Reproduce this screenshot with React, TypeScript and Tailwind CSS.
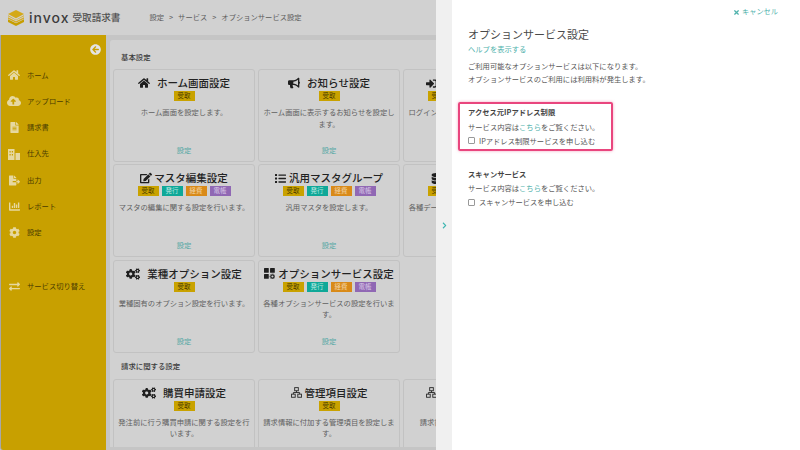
import { FaHome, FaCloudUploadAlt, FaFileAlt, FaFileExport, FaChartBar, FaCog, FaExchangeAlt, FaBullhorn, FaSignInAlt, FaEdit, FaList, FaDatabase, FaCogs, FaArrowCircleLeft, FaChevronRight, FaTimes } from "react-icons/fa";
import type { ReactNode } from "react";

const FONT = "font-['Noto_Sans_CJK_JP','Noto_Sans',sans-serif]";

function Logo() {
  return (
    <svg width="16" height="16" viewBox="0 0 24 24" className="shrink-0">
      <path d="M0 14 L12 20 L24 14 V18 L12 24 L0 18 Z" fill="#c79e00" />
      <path d="M0 11 L12 17 L24 11 L24 13 L12 19 L0 13 Z" fill="#d8ad20" />
      <path d="M12 0 L24 6 L12 12.5 L0 6 Z" fill="#d4a918" />
      <path d="M0 8 L12 14.5 L24 8 V9.5 L12 15.5 L0 9.5 Z" fill="#d8ad20" />
    </svg>
  );
}

function OptionIcon() {
  return (
    <svg width="11" height="11" viewBox="0 0 12 12" fill="#1f1f1f">
      <rect x="0" y="0" width="5.2" height="5.2" rx="0.6" />
      <rect x="6.6" y="0" width="5.2" height="5.2" rx="0.6" />
      <rect x="0" y="6.6" width="5.2" height="5.2" rx="0.6" />
      <circle cx="9.2" cy="9.2" r="1.8" fill="none" stroke="#1f1f1f" strokeWidth="1.3" />
      <circle cx="9.2" cy="9.2" r="2.8" fill="none" stroke="#1f1f1f" strokeWidth="0.7" strokeDasharray="1 1" />
    </svg>
  );
}

function TreeIcon() {
  return (
    <svg width="11" height="11" viewBox="0 0 12 12" fill="none" stroke="#2a2a2a" strokeWidth="1">
      <rect x="4" y="0.7" width="4" height="3.4" />
      <path d="M6 4.1 V6 M2.6 7.8 V6 H9.4 V7.8" />
      <rect x="0.6" y="7.8" width="4" height="3.4" />
      <rect x="7.4" y="7.8" width="4" height="3.4" />
    </svg>
  );
}

function VendorIcon() {
  return (
    <svg width="12" height="11" viewBox="0 0 12 11" fill="#e6d8a0">
      <rect x="0" y="0" width="6.5" height="11" />
      <rect x="7.5" y="4" width="4.5" height="7" />
      <rect x="1.5" y="2" width="1.2" height="1.5" fill="#c8a000" />
      <rect x="3.8" y="2" width="1.2" height="1.5" fill="#c8a000" />
      <rect x="1.5" y="5" width="1.2" height="1.5" fill="#c8a000" />
      <rect x="3.8" y="5" width="1.2" height="1.5" fill="#c8a000" />
    </svg>
  );
}

const TAGS: Record<string, string> = {
  受取: "bg-[#c9a200] text-[#4a3c00]",
  発行: "bg-[#0fa898] text-[#bfe8e2]",
  経費: "bg-[#d98a18] text-[#f2d6a8]",
  電帳: "bg-[#9068b4] text-[#dccbe8]",
};

function Tag({ name }: { name: string }) {
  return (
    <span className={`flex h-[10px] w-[21px] items-center justify-center text-[6.4px] leading-none ${TAGS[name]}`}>
      {name}
    </span>
  );
}

const ALL = ["受取", "発行", "経費", "電帳"];

function Card({ icon, title, tags, desc, link = true, gap = "gap-[7px]" }: { icon: ReactNode; title: string; tags: string[]; desc: string; link?: boolean; gap?: string }) {
  return (
    <div className="flex h-[93px] w-[142px] shrink-0 flex-col items-center rounded-[3px] border border-[#c2c2c2] px-[3px] pt-[5px]">
      <div className={`flex h-[16px] items-center whitespace-nowrap text-[10.5px] font-medium leading-none text-[#222] ${gap}`}>
        <span className="flex items-center text-[#1f1f1f]">{icon}</span>
        <span>{title}</span>
      </div>
      <div className="flex gap-[3px]">
        {tags.map((t) => (
          <Tag key={t} name={t} />
        ))}
      </div>
      <p className="mt-[6px] w-[134px] text-center text-[7.3px] leading-[11.5px] text-[#606060]">{desc}</p>
      {link && <span className="mt-auto pb-[6px] text-[7.3px] leading-[10px] text-[#55a8a4]">設定</span>}
    </div>
  );
}

const NAV: [ReactNode, string][] = [
  [<FaHome size={12} />, "ホーム"],
  [<FaCloudUploadAlt size={14} />, "アップロード"],
  [<FaFileAlt size={11} />, "請求書"],
  [<VendorIcon />, "仕入先"],
  [<FaFileExport size={11} />, "出力"],
  [<FaChartBar size={11} />, "レポート"],
  [<FaCog size={11} />, "設定"],
];

function NavItem({ icon, label, cls = "" }: { icon: ReactNode; label: string; cls?: string }) {
  return (
    <div className={`flex h-[26.3px] items-center ${cls}`}>
      <span className="flex w-[26px] justify-center text-[#e6d8a0]">{icon}</span>
      <span className="text-[7.3px] leading-none text-[#4a3c00]">{label}</span>
    </div>
  );
}

export default function App() {
  return (
    <div className={`flex h-[450px] w-[800px] overflow-hidden bg-white ${FONT}`}>
      <div className="flex h-full w-[436px] shrink-0 flex-col overflow-hidden bg-[#c5c5c5]">
        <header className="flex h-[35px] shrink-0 items-center bg-[#d1d1d1] pl-[8px]">
          <Logo />
          <span className="ml-[5px] font-['Inter','Liberation_Sans',sans-serif] text-[14px] font-medium leading-none tracking-[1px] text-[#3c3c3c]">invox</span>
          <span className="ml-[3px] text-[9.6px] font-medium leading-none text-[#505050]">受取請求書</span>
          <nav className="ml-[29px] flex items-center gap-[5px] text-[7.3px] leading-none text-[#5c5c5c]">
            <span>設定</span>
            <span>&gt;</span>
            <span>サービス</span>
            <span>&gt;</span>
            <span>オプションサービス設定</span>
          </nav>
        </header>
        <div className="flex min-h-0 flex-1">
          <aside className="flex w-[106px] shrink-0 flex-col rounded-bl-[3px] border-l border-[#a8a8a8] bg-[#c8a000]">
            <div className="flex h-[20px] items-end justify-end pr-[5px] text-[#e4e4e4]">
              <FaArrowCircleLeft size={11} />
            </div>
            <div className="mt-[7px] flex flex-col">
              {NAV.map(([i, l]) => (
                <NavItem key={l} icon={i} label={l} />
              ))}
            </div>
            <NavItem icon={<FaExchangeAlt size={11} />} label="サービス切り替え" cls="mt-[27px]" />
          </aside>
          <main className="mb-[3px] ml-[4px] mt-[5px] min-w-0 flex-1 overflow-hidden rounded-tl-[3px] bg-[#d1d1d1] pl-[3px] pt-[8px]">
            <h2 className="pl-[8px] text-[7.4px] font-medium leading-[17px] text-[#3a3a3a]">基本設定</h2>
            <div className="mt-[4px] grid w-[432px] grid-cols-[142px_142px_142px] gap-x-[3px] gap-y-[2.4px]">
              <Card icon={<FaHome size={12} />} title="ホーム画面設定" tags={["受取"]} desc="ホーム画面を設定します。" />
              <Card icon={<FaBullhorn size={12} />} title="お知らせ設定" tags={["受取"]} desc="ホーム画面に表示するお知らせを設定します。" />
              <Card icon={<FaSignInAlt size={11} />} title="ログイン画面設定" tags={ALL} desc="ログインに関するセキュリティを設定します。" gap="gap-[1px]" />
              <Card icon={<FaEdit size={12} />} title="マスタ編集設定" tags={ALL} desc="マスタの編集に関する設定を行います。" gap="gap-[2px]" />
              <Card icon={<FaList size={11} />} title="汎用マスタグループ" tags={ALL} desc="汎用マスタを設定します。" gap="gap-[3px]" />
              <Card icon={<FaDatabase size={11} />} title="データ連携設定" tags={ALL} desc="各種データの連携に関する設定します。" gap="gap-[2px]" />
              <Card icon={<FaCogs size={14} />} title="業種オプション設定" tags={["受取"]} desc="業種固有のオプション設定を行います。" />
              <Card icon={<OptionIcon />} title="オプションサービス設定" tags={ALL} desc="各種オプションサービスの設定を行います。" gap="gap-[3px]" />
            </div>
            <h2 className="mt-[4px] pl-[8px] text-[7.4px] font-medium leading-[17px] text-[#3a3a3a]">請求に関する設定</h2>
            <div className="mt-[5px] grid w-[432px] grid-cols-[142px_142px_142px] gap-[3px]">
              <Card icon={<FaCogs size={14} />} title="購買申請設定" tags={["受取"]} desc="発注前に行う購買申請に関する設定を行います。" />
              <Card icon={<TreeIcon />} title="管理項目設定" tags={["受取"]} desc="請求情報に付加する管理項目を設定します。" gap="gap-[3px]" />
              <Card icon={<TreeIcon />} title="請求情報項目設定" tags={["受取"]} desc="請求書の表示項目を設定します。" gap="gap-[1px]" />
            </div>
          </main>
        </div>
      </div>

      <div className="flex h-full w-[16px] shrink-0 items-center justify-center bg-[#f0f0f0] text-[#3bb5b0]">
        <FaChevronRight size={7} />
      </div>

      <section className="min-w-0 flex-1 bg-white pl-[16px] pr-[22px]">
        <div className="flex h-[24px] items-center justify-end gap-[2px] text-[7.2px] leading-none text-[#4fb2ac]">
          <FaTimes size={7} />
          <span>キャンセル</span>
        </div>
        <h1 className="mt-[2px] text-[11px] font-normal leading-[16px] text-[#4a4a4a]">オプションサービス設定</h1>
        <a className="mt-[2px] block text-[7.3px] leading-[11px] text-[#4fb2ac]">ヘルプを表示する</a>
        <p className="mt-[5px] text-[7.3px] leading-[12.5px] text-[#555]">
          ご利用可能なオプションサービスは以下になります。
          <br />
          オプションサービスのご利用には利用料が発生します。
        </p>
        <div className="-ml-[10px] mt-[17px] h-[49px] w-[155px] rounded-[2px] border-2 border-[#e9467e] pl-[8px] pt-[2px] shadow-[0_0_3px_rgba(233,70,126,0.5)]">
          <Service title="アクセス元IPアドレス制限" label="IPアドレス制限サービスを申し込む" />
        </div>
        <div className="mt-[16.5px]">
          <Service title="スキャンサービス" label="スキャンサービスを申し込む" />
        </div>
      </section>
    </div>
  );
}

function Service({ title, label }: { title: string; label: string }) {
  return (
    <div className="flex flex-col">
      <h3 className="text-[7.3px] font-bold leading-[13px] text-[#444]">{title}</h3>
      <p className="mt-[1.5px] text-[7.3px] leading-[12px] text-[#555]">
        サービス内容は<span className="text-[#4fb2ac]">こちら</span>をご覧ください。
      </p>
      <label className="mt-[2px] flex items-center gap-[4px] text-[7.3px] leading-[12px] text-[#555]">
        <span className="h-[7px] w-[7px] rounded-[1px] border border-[#999] bg-white" />
        {label}
      </label>
    </div>
  );
}
